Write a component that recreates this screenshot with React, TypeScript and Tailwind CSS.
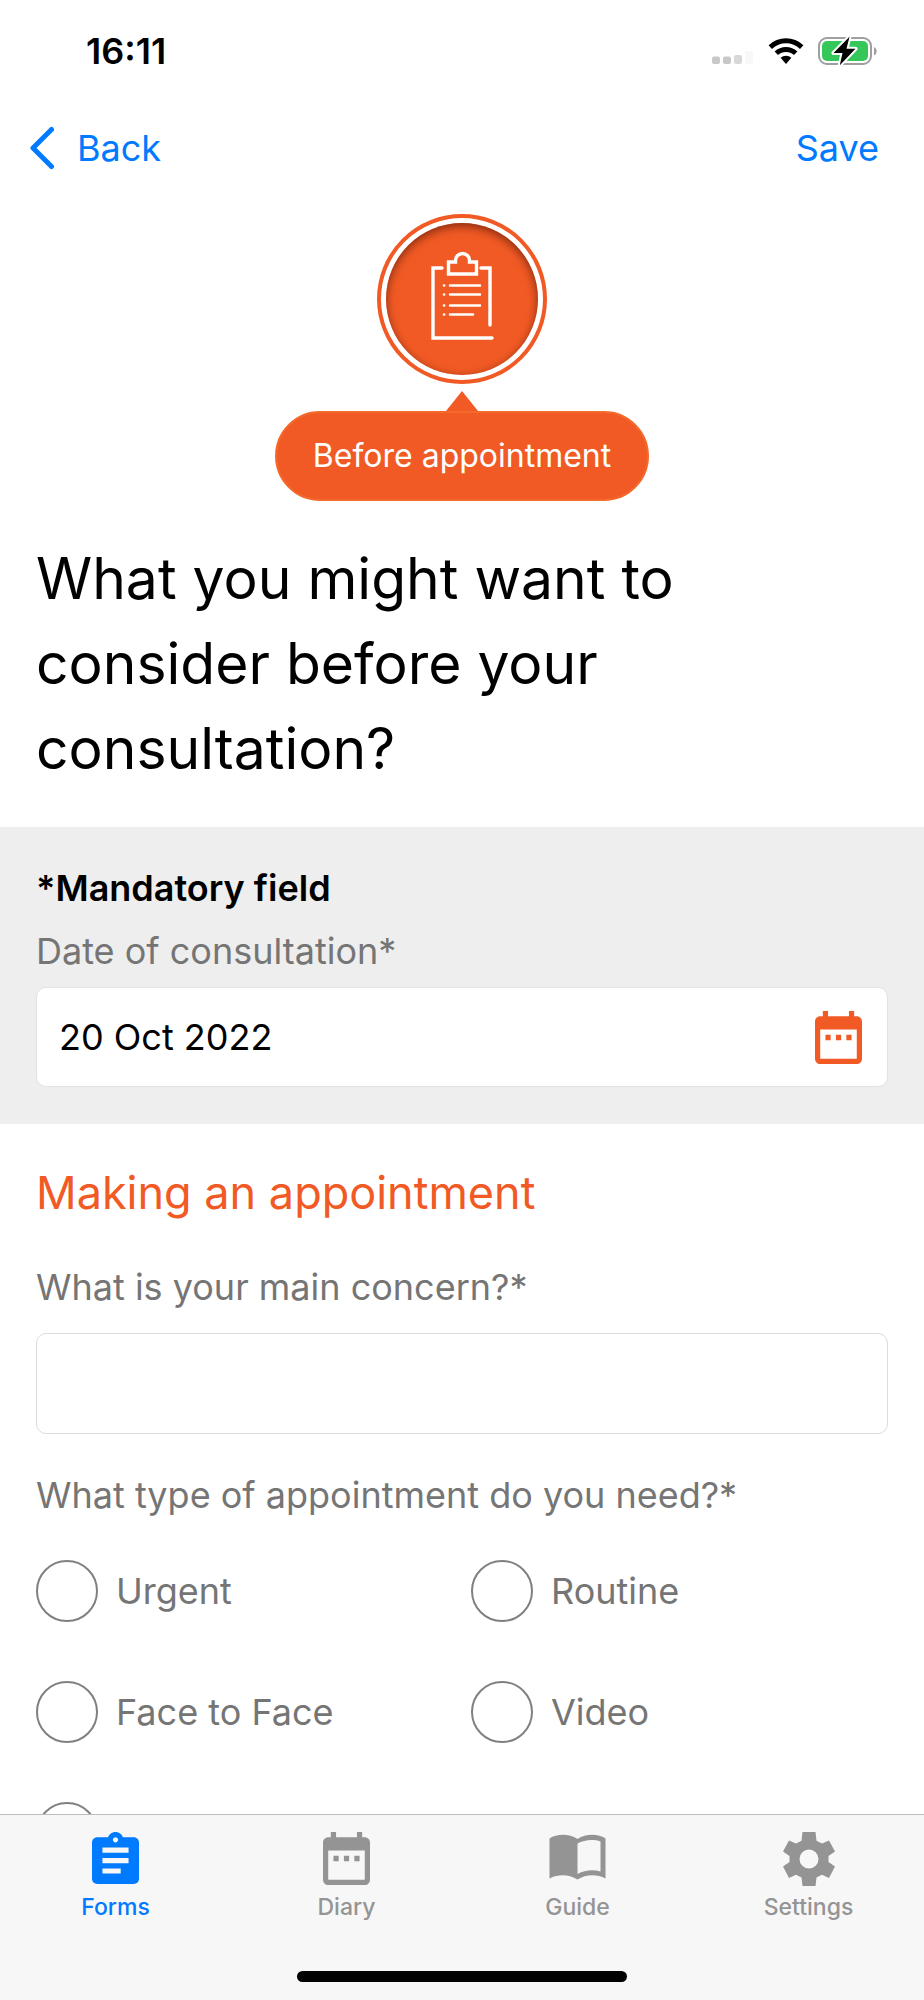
import { useState, type ReactNode } from "react";

const appointmentTypes = ["Urgent", "Routine", "Face to Face", "Video", "Telephone"];

function StatusBar() {
  return (
    <div className="flex h-[102px] items-center justify-between pl-[86px] pr-[46px]">
      <span className="text-[36px] leading-10 font-semibold">16:11</span>
      <div className="flex items-center">
        <svg width="44" height="28" viewBox="0 0 44 28" className="mr-3" aria-label="No signal" role="img">
          <rect x="0" y="19.500" width="8" height="7.500" rx="2" fill="#c8c8c8" />
          <rect x="11" y="19.500" width="8" height="7.500" rx="2" fill="#c8c8c8" />
          <rect x="22" y="18" width="8" height="9" rx="2" fill="#d8d8d8" />
          <rect x="33" y="14" width="8" height="13" rx="2" fill="#f8f8f8" />
        </svg>
        <svg width="36" height="28" viewBox="0 0 36 28" className="mr-[14px]" aria-label="Wi-Fi" role="img">
          <path d="M0.6 8.3 A25 25 0 0 1 35.4 8.3 L32 11.9 A20 20 0 0 0 4 11.9 Z" fill="#000" />
          <path d="M6.6 14.6 A16.5 16.5 0 0 1 29.4 14.6 L26 18.1 A11.6 11.6 0 0 0 10 18.1 Z" fill="#000" />
          <path d="M12.6 20.8 A8 8 0 0 1 23.4 20.8 L18 27 Z" fill="#000" />
        </svg>
        <svg width="60" height="30" viewBox="0 0 60 30" aria-label="Battery charging" role="img">
          <rect x="1" y="2" width="52" height="26" rx="8" fill="none" stroke="#9f9f9f" strokeWidth="2" />
          <rect x="4" y="5" width="46" height="20" rx="5" fill="#35c759" />
          <path d="M56 11 C59.5 12.5 59.5 18 56 19.5 Z" fill="#9f9f9f" />
          <path d="M31.500 0.800 L15.500 17 H24.500 L21.800 29.200 L37.500 12.800 H28.500 Z" fill="#000" stroke="#fff" strokeWidth="4" paintOrder="stroke" strokeLinejoin="round" />
        </svg>
      </div>
    </div>
  );
}

function StageBadge() {
  return (
    <div className="flex flex-col items-center">
      <div className="rounded-full border-4 border-[#f15a24] p-[5px]">
        <div className="grid size-[152px] place-items-center rounded-full bg-[#f15a24] shadow-[inset_0_3px_10px_rgba(60,10,0,0.6)]">
          <svg width="66" height="92" viewBox="-1 3 66 92" className="overflow-visible" fill="none" stroke="#fff" strokeLinecap="round" aria-hidden="true">
            <path d="M12 18 H3 V88 H62 M51 18 H60 V75" strokeWidth="3.400" />
            <path d="M18.500 12 H25.500 V10.500 A7 7 0 0 1 39.500 10.500 V12 H46.500 V24 H18.500 Z" strokeWidth="3.400" />
            <path d="M20 35.500 H50 M20 44.500 H50 M20 55.500 H50 M20 64.500 H43" strokeWidth="2.500" />
            <path d="M14 35.500 H14.200 M14 44.500 H14.200 M14 55.500 H14.200 M14 64.500 H14.200" strokeWidth="2.600" />
          </svg>
        </div>
      </div>
      <svg width="32" height="20" viewBox="0 0 32 20" className="mt-[7px]" aria-hidden="true">
        <path d="M16 0 L32 20 H0 Z" fill="#f15a24" />
      </svg>
      <div className="rounded-full border-2 border-[#f46a2c] bg-[#f15a24] px-9 py-[21px] text-[32px] leading-[44px] text-white">
        Before appointment
      </div>
    </div>
  );
}

function CalendarIcon() {
  return (
    <svg width="47" height="53" viewBox="3 2 18 20" preserveAspectRatio="none" fill="currentColor" aria-hidden="true">
      <path d="M9 11H7v2h2v-2zm4 0h-2v2h2v-2zm4 0h-2v2h2v-2zm2-7h-1V2h-2v2H8V2H6v2H5c-1.11 0-1.99.9-1.99 2L3 20c0 1.100.89 2 2 2h14c1.100 0 2-.9 2-2V6c0-1.100-.9-2-2-2zm0 16H5V9h14v11z" />
    </svg>
  );
}

function FormsIcon() {
  return (
    <svg width="47" height="52" viewBox="3 1 18 20" preserveAspectRatio="none" fill="currentColor" aria-hidden="true">
      <path d="M19 3h-4.180C14.400 1.840 13.300 1 12 1c-1.300 0-2.400.84-2.820 2H5c-1.100 0-2 .9-2 2v14c0 1.100.9 2 2 2h14c1.100 0 2-.9 2-2V5c0-1.100-.9-2-2-2zm-7 0c.55 0 1 .45 1 1s-.45 1-1 1-1-.45-1-1 .45-1 1-1zm2 14H7v-2h7v2zm3-4H7v-2h10v2zm0-4H7V7h10v2z" />
    </svg>
  );
}

function GuideIcon() {
  return (
    <svg width="57" height="49" viewBox="0 0 57 49" aria-hidden="true">
      <path
        fill="currentColor"
        fillRule="evenodd"
        d="M0.500 6.500 C8 1.500 20 1.500 28.500 7 C37 1.500 49 1.500 56.500 6.500 V46.500 C48 42 37 42 28.500 47.500 C20 42 9 42 0.500 46.500 Z M28.500 11.500 V42 C36 38 44 37.500 51.500 39.500 V9.500 C44 7 35 8 28.500 11.500 Z"
      />
    </svg>
  );
}

function SettingsIcon() {
  return (
    <svg width="52" height="54" viewBox="0 0 52 54" aria-hidden="true">
      <path
        fill="currentColor"
        fillRule="evenodd"
        d="M19.500 0 H32.500 L33.500 8.700 L39 11.500 L46 8.500 L52 19.500 L45.500 24 V30 L52 34.500 L46 46 L39 42.700 L33.500 45.500 L32.500 54 H19.500 L18.500 45.500 L13 42.700 L6 46 L0 34.500 L6.500 30 V24 L0 19.500 L6 8.500 L13 11.500 L18.500 8.700 Z M26 17.500 A9.500 9.500 0 1 0 26 36.500 A9.500 9.500 0 1 0 26 17.500 Z"
      />
    </svg>
  );
}

const tabs: { label: string; icon: ReactNode }[] = [
  { label: "Forms", icon: <FormsIcon /> },
  { label: "Diary", icon: <CalendarIcon /> },
  { label: "Guide", icon: <GuideIcon /> },
  { label: "Settings", icon: <SettingsIcon /> },
];

export default function App() {
  const [date, setDate] = useState("20 Oct 2022");
  const [concern, setConcern] = useState("");
  const [type, setType] = useState("");

  return (
    <div className="flex h-screen flex-col bg-white font-['Inter',sans-serif] text-black">
      <StatusBar />
      <header className="flex h-[92px] items-center justify-between pl-[29px] pr-[45px] text-[36px] leading-[44px] text-[#007aff]">
        <button type="button" className="flex items-center gap-[22px]">
          <svg width="26" height="44" viewBox="0 0 26 44" fill="none" stroke="currentColor" strokeWidth="5" strokeLinecap="round" strokeLinejoin="round" aria-hidden="true">
            <path d="M22.500 3.500 L4 22 L22.500 40.500" />
          </svg>
          Back
        </button>
        <button type="button">Save</button>
      </header>

      <main className="min-h-0 flex-1 overflow-y-auto pt-5 [scrollbar-width:none]">
        <StageBadge />
        <h1 className="mt-[35px] px-9 pb-9 text-[57px] leading-[85px]">What you might want to consider before your consultation?</h1>

        <section className="bg-[#eeeeee] px-9 pt-[39px] pb-[37px]">
          <p className="text-[36px] leading-[44px] font-semibold">*Mandatory field</p>
          <label htmlFor="date" className="mt-[19px] block text-[36px] leading-[44px] text-[#757575]">
            Date of consultation*
          </label>
          <div className="mt-[14px] flex h-[100px] items-center rounded-[10px] border border-[#e2e2e2] bg-white pr-[25px] pl-[22px]">
            <input
              id="date"
              value={date}
              onChange={(e) => setDate(e.target.value)}
              className="min-w-0 flex-1 bg-transparent text-[36px] leading-[44px] outline-none"
            />
            <button type="button" aria-label="Choose date" className="text-[#f15a24]">
              <CalendarIcon />
            </button>
          </div>
        </section>

        <section className="px-9 pt-[39px]">
          <h2 className="text-[45px] leading-[60px] text-[#f15a24]">Making an appointment</h2>
          <label htmlFor="concern" className="mt-[42px] block text-[36px] leading-[44px] text-[#757575]">
            What is your main concern?*
          </label>
          <input
            id="concern"
            value={concern}
            onChange={(e) => setConcern(e.target.value)}
            className="mt-6 block h-[101px] w-full rounded-[10px] border border-[#dcdcdc] px-[22px] text-[36px] outline-none"
          />
          <fieldset className="mt-[39px]">
            <legend className="text-[36px] leading-[44px] text-[#757575]">What type of appointment do you need?*</legend>
            <div className="mt-[43px] grid grid-cols-2 gap-x-[18px] gap-y-[59px]">
              {appointmentTypes.map((name) => (
                <label key={name} className="flex items-center gap-[18px] text-[36px] leading-[44px] text-[#757575]">
                  <input
                    type="radio"
                    name="appointment-type"
                    value={name}
                    checked={type === name}
                    onChange={() => setType(name)}
                    className="size-[62px] shrink-0 appearance-none rounded-full border-2 border-[#808080] checked:border-[18px] checked:border-[#f15a24]"
                  />
                  {name}
                </label>
              ))}
            </div>
          </fieldset>
        </section>
      </main>

      <nav className="border-t border-[#bdbdbd] bg-[#f7f7f7] pb-[18px]">
        <div className="grid grid-cols-4">
          {tabs.map((tab, i) => (
            <a
              key={tab.label}
              href={"#" + tab.label.toLowerCase()}
              aria-current={i === 0 ? "page" : undefined}
              className={`flex flex-col items-center pt-[17px] text-[23px] leading-7 font-medium ${i === 0 ? "text-[#007aff]" : "text-[#949494]"}`}
            >
              <span className="flex h-[61px] items-start">{tab.icon}</span>
              {tab.label}
            </a>
          ))}
        </div>
        <div className="mx-auto mt-[50px] h-[11px] w-[330px] rounded-full bg-black" />
      </nav>
    </div>
  );
}
